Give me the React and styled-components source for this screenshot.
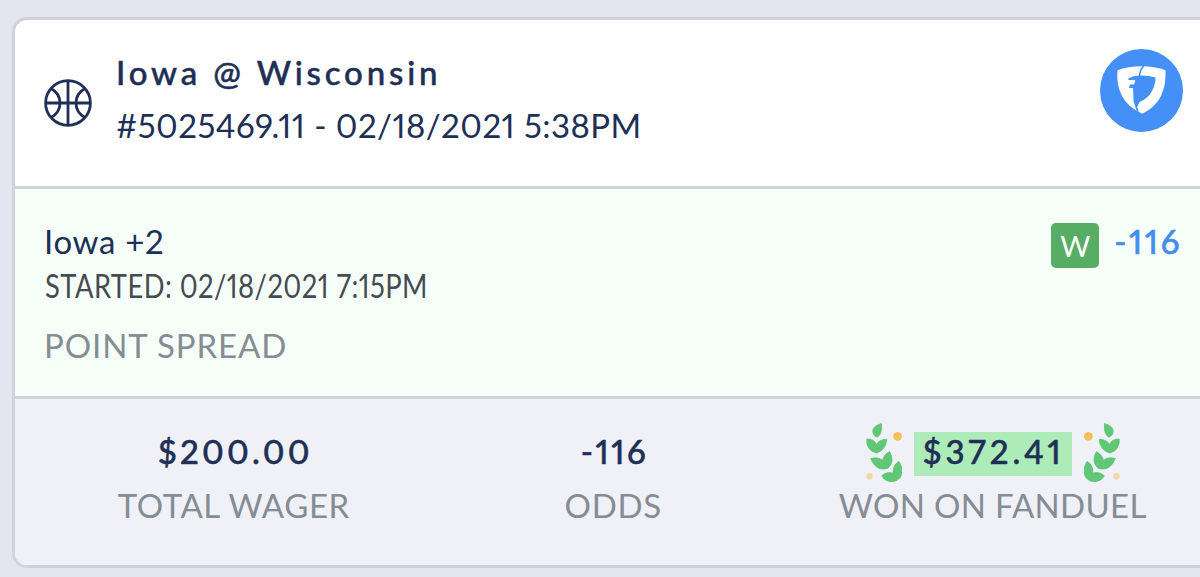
import React from 'react';
import styled, { createGlobalStyle } from 'styled-components';

const GlobalStyle = createGlobalStyle`
  * {
    box-sizing: border-box;
  }

  body {
    margin: 0;
    background: #e3e6ee;
    overflow: hidden;
  }
`;

const Page = styled.main`
  height: 577px;
  padding: 17px 0 0 12px;
  overflow: hidden;
  background: #e3e6ee;
  font-family: 'Lato', sans-serif;
  font-size: 33px;
  font-variant-numeric: proportional-nums;
  color: #202f55;
`;

const Card = styled.article`
  height: 551px;
  display: flex;
  flex-direction: column;
  border: 3px solid #cfd3d9;
  border-right: none;
  border-radius: 15px 0 0 15px;
  background: #ffffff;
  overflow: hidden;
`;

const CardHeader = styled.header`
  display: flex;
  align-items: flex-start;
  height: 166px;
  padding: 25px 17px 0 29px;
`;

const SportIcon = styled.svg`
  width: 48px;
  height: 48px;
  margin: 34px 24px 0 0;
  flex: none;
`;

const HeaderText = styled.div`
  flex: 1;
  padding-top: 1px;
  white-space: nowrap;
`;

const EventTitle = styled.h1`
  margin: 0;
  font-size: 33px;
  font-weight: 500;
  line-height: 53px;
  letter-spacing: 3.85px;
  -webkit-text-stroke: 0.5px currentColor;
`;

const BetReference = styled.div`
  line-height: 53px;
  letter-spacing: 0.44px;
`;

const BookLogo = styled.svg`
  width: 83px;
  height: 83px;
  margin-top: 4px;
  flex: none;
`;

const Pick = styled.section`
  display: flex;
  justify-content: space-between;
  height: 210px;
  padding: 30px 18px 0 30px;
  border-top: 3px solid #cfd5d9;
  background: #f5fff8;
  line-height: 44px;
  white-space: nowrap;
`;

const PickName = styled.div`
  margin-left: -1px;
  letter-spacing: 0.7px;
`;

const StartTime = styled.div`
  color: #454b50;
  letter-spacing: 0.53px;
  transform: scaleX(0.829);
  transform-origin: left;
`;

const Market = styled.div`
  margin: 16px 0 0 -1px;
  letter-spacing: 0.9px;
  color: #858d94;
`;

const PickResult = styled.div`
  display: flex;
  align-items: flex-start;
`;

const ResultBadge = styled.span`
  width: 48px;
  height: 45px;
  margin: 4px 15px 0 0;
  border-radius: 5px;
  background: #58ad65;
  color: #ffffff;
  font-size: 29px;
  line-height: 45px;
  text-align: center;
`;

const PickOdds = styled.span`
  color: #448ded;
  font-weight: 500;
  letter-spacing: 2.6px;
  -webkit-text-stroke: 0.5px currentColor;
`;

const Totals = styled.footer`
  flex: 1;
  display: grid;
  grid-template-columns: repeat(3, 379.5px);
  padding: 26px 0 0 29px;
  border-top: 3px solid #cfd3d9;
  background: #f0f1f7;
  white-space: nowrap;
`;

const Total = styled.div`
  display: flex;
  flex-direction: column;
  align-items: center;
  line-height: 54px;
`;

const TotalValue = styled.div`
  display: flex;
  align-items: center;
  height: 54px;
  font-weight: 500;
`;

const Amount = styled.span`
  margin: 0 -${props => props.$spacing}px 2px 0;
  letter-spacing: ${props => props.$spacing}px;
  -webkit-text-stroke: 0.5px currentColor;
`;

const TotalLabel = styled.div`
  margin-top: -1px;
  color: #858d94;
  letter-spacing: ${props => props.$spacing}px;
`;

const Payout = styled.span`
  height: 44px;
  width: 158px;
  margin: 4px 12px 0;
  padding-left: 9px;
  background: #adebb9;
  line-height: 39px;
  letter-spacing: 3.9px;
  -webkit-text-stroke: 0.5px currentColor;
`;

const LaurelIcon = styled.svg`
  width: 36px;
  height: 60px;
  transform: ${props => (props.$flip ? 'scaleX(-1)' : 'none')};
`;

const Basketball = () => (
  <SportIcon viewBox="0 0 48 48" fill="none" stroke="#202f55" strokeWidth="2.8">
    <circle cx="24" cy="24" r="22.4" />
    <path d="M24 1.5v45M1.5 24h45" />
    <path d="M7 9.5C12.5 12.5 16 17.5 16 24S12.5 35.5 7 38.5" />
    <path d="M41 9.5C35.5 12.5 32 17.5 32 24s3.5 11.5 9 14.5" />
  </SportIcon>
);

const Shield = () => (
  <BookLogo viewBox="0 0 83 83">
    <circle cx="41.5" cy="41.5" r="41.5" fill="#4490f7" />
    <path
      d="M17.5 21.3Q28 17.3 41.5 17.3T65.5 21.3Q66.2 36 61 47T42.3 64.7Q28 58.5 22 47T17.5 21.3Z"
      fill="#ffffff"
    />
    <path
      d="M39.5 26.6Q48 26.2 55.5 28.5Q55.5 37 50.5 44.5Q46 50.5 39.6 53L37.2 58L38.8 62.8L36.6 61.8L33.6 52.5L33 39H29L29.8 35.6H34.2L35.3 31H28.2L28.8 29.2Q33 27 39.5 26.6Z"
      fill="#4490f7"
    />
    <path d="M43.6 16.8L40.8 21L39 27.5" stroke="#4490f7" strokeWidth="1.6" fill="none" />
  </BookLogo>
);

const Laurel = ({ flip }) => (
  <LaurelIcon viewBox="0 0 36 60" $flip={flip}>
    <g fill="#5fc775" stroke="#5fc775" strokeWidth="0.9" strokeLinejoin="round">
      <path d="M15.5 1.5Q6 4.5 6.8 10Q7.3 13.5 11 15.3Q16.5 12.5 15.5 1.5Z" />
      <path d="M0.8 17Q8.5 17 10.4 22.5Q13.5 17.3 20.8 17.3Q20 28 10.5 31Q0 28.5 0.8 17Z" />
      <path d="M4.7 36.5Q12.5 34.5 16.7 38.5Q17 33.5 23.5 29.5Q29.5 40 21.5 46.5Q9.5 49.5 4.7 36.5Z" />
      <path d="M15.7 53.7Q21 49.2 27.2 51.2Q26.5 43 33 39.5Q38 47.5 34.5 55Q30.5 60.5 23.5 59.5Q18 58.5 15.7 53.7Z" />
    </g>
    <circle cx="31.6" cy="14.3" r="4.4" fill="#f2c15b" />
    <circle cx="3.6" cy="54.3" r="3.2" fill="#f3d9a8" />
  </LaurelIcon>
);

const App = () => (
  <>
    <GlobalStyle />
    <Page>
      <Card>
        <CardHeader>
          <Basketball />
          <HeaderText>
            <EventTitle>Iowa @ Wisconsin</EventTitle>
            <BetReference>#5025469.11 - 02/18/2021 5:38PM</BetReference>
          </HeaderText>
          <Shield />
        </CardHeader>

        <Pick>
          <div>
            <PickName>Iowa +2</PickName>
            <StartTime>STARTED: 02/18/2021 7:15PM</StartTime>
            <Market>POINT SPREAD</Market>
          </div>
          <PickResult>
            <ResultBadge>W</ResultBadge>
            <PickOdds>-116</PickOdds>
          </PickResult>
        </Pick>

        <Totals>
          <Total>
            <TotalValue>
              <Amount $spacing={3.3}>$200.00</Amount>
            </TotalValue>
            <TotalLabel $spacing={0.6}>TOTAL WAGER</TotalLabel>
          </Total>
          <Total>
            <TotalValue>
              <Amount $spacing={2.5}>-116</Amount>
            </TotalValue>
            <TotalLabel $spacing={0.7}>ODDS</TotalLabel>
          </Total>
          <Total>
            <TotalValue>
              <Laurel />
              <Payout>$372.41</Payout>
              <Laurel flip />
            </TotalValue>
            <TotalLabel $spacing={0.3}>WON ON FANDUEL</TotalLabel>
          </Total>
        </Totals>
      </Card>
    </Page>
  </>
);

export default App;
